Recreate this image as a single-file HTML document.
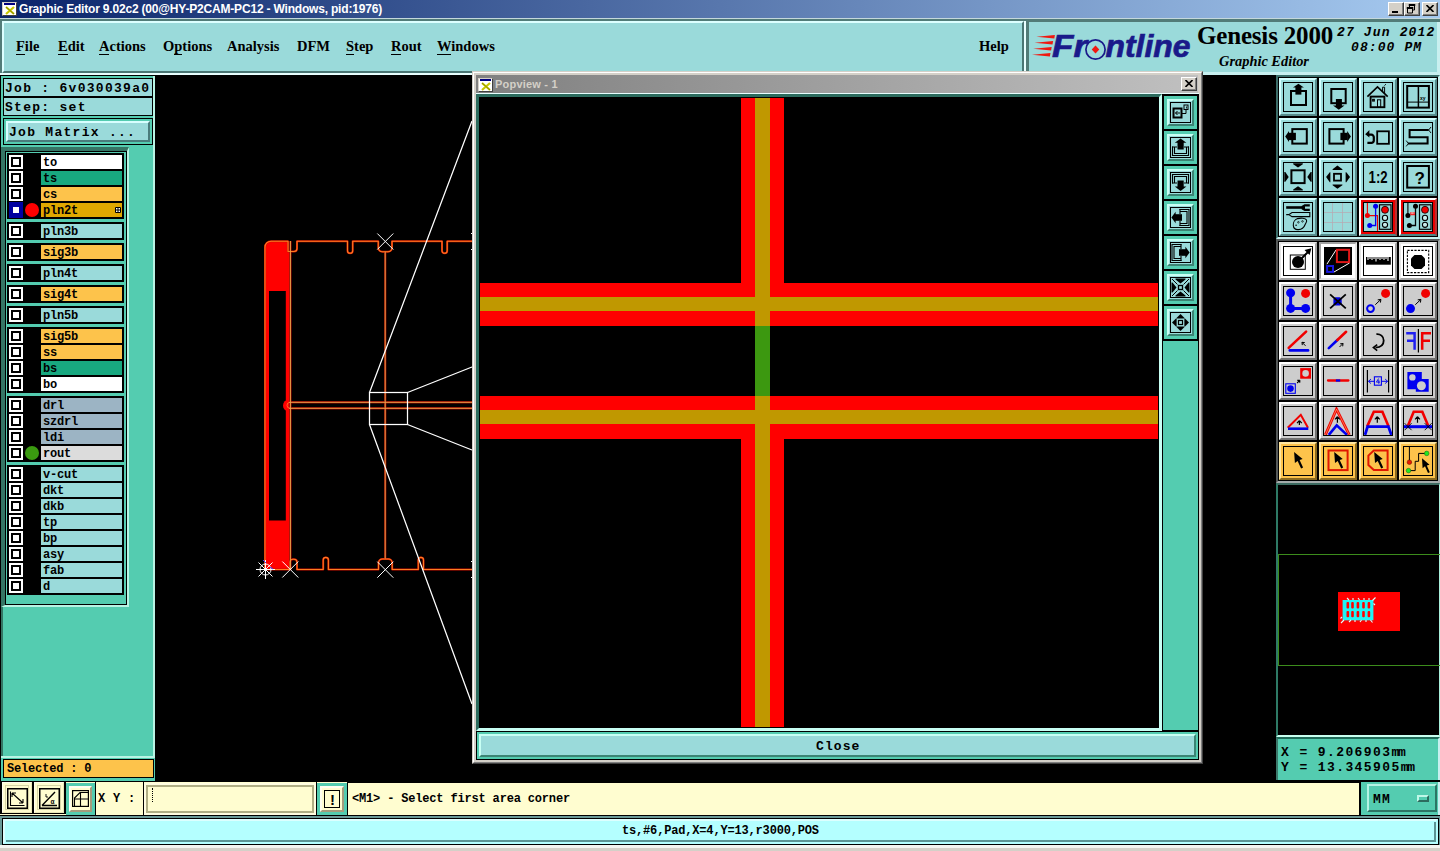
<!DOCTYPE html><html><head><meta charset="utf-8"><title>Graphic Editor</title><style>
*{box-sizing:border-box;margin:0;padding:0}
html,body{width:1440px;height:851px;overflow:hidden;background:#d4d0c8}
body{position:relative;font-family:"Liberation Mono",monospace;font-weight:bold;font-size:13px;color:#000}
.a{position:absolute}
.serif{font-family:"Liberation Serif",serif}
.sans{font-family:"Liberation Sans",sans-serif}
.mono{font-family:"Liberation Mono",monospace}
.t{position:absolute;white-space:nowrap;line-height:1}
.mi{position:absolute;top:38px;font:bold 14.5px "Liberation Serif",serif;white-space:nowrap;line-height:16px}
.mi u{text-decoration:none;border-bottom:1px solid #000;padding-bottom:0}
.btn{position:absolute;width:38px;height:38px;border:2px solid;border-color:#d4ffff #588c8c #588c8c #d4ffff;background:#9adada}
.btn i{position:absolute;left:2px;top:2px;width:30px;height:30px;border:1px solid #000;display:block}
.btn svg{position:absolute;left:3px;top:3px;width:28px;height:28px;overflow:hidden}
.g .btn,.btn.g{background:#cdcdcd;border-color:#ffffff #707070 #707070 #ffffff}
.btn.w{background:#ffffff;border-color:#e6e6e6 #a2a2a2 #a2a2a2 #e6e6e6}
.btn.o{background:#fdc34b;border-color:#ffe6a0 #8a6a20 #8a6a20 #ffe6a0}
.row{position:absolute;left:0;width:116px;height:16px}
.cb{position:absolute;left:2px;top:1px;width:14px;height:14px;background:#fff;border:2px solid #fff;box-shadow:inset 0 0 0 2px #000}
.lb{position:absolute;left:34px;top:1px;width:81px;height:14px;font:bold 12px/16px "Liberation Mono",monospace;letter-spacing:-0.2px;padding-left:2px;white-space:nowrap;overflow:hidden}
.grp{position:absolute;left:7px;width:117px;background:#000}
</style></head><body>
<div class="a" style="left:0;top:0;width:1440px;height:18px;background:linear-gradient(90deg,#0a246a,#a6caf0)"></div>
<div class="a" style="left:2px;top:2px;width:15px;height:14px;background:#fff;border:1px solid #d4d0c8;border-right-color:#404040;border-bottom-color:#404040"><div class="a" style="left:1px;top:0;width:11px;height:2px;background:#000080"></div><svg class="a" style="left:2px;top:3px" width="10" height="9" viewBox="0 0 10 9"><path d="M1 1L9 8M9 1L1 8" stroke="#c8c800" stroke-width="2.2"/><path d="M1 1L9 8" stroke="#606000" stroke-width=".6"/></svg></div>
<div class="t sans" style="left:19px;top:3px;font-size:12px;font-weight:bold;color:#fff;letter-spacing:-0.19px">Graphic Editor 9.02c2 (00@HY-P2CAM-PC12 - Windows, pid:1976)</div>
<div class="a" style="left:1388px;top:2px;width:16px;height:14px;background:#d4d0c8;border:1px solid;border-color:#fff #404040 #404040 #fff;box-shadow:inset -1px -1px 0 #808080"><div class="a" style="left:3px;top:8px;width:6px;height:2px;background:#000"></div></div><div class="a" style="left:1404px;top:2px;width:16px;height:14px;background:#d4d0c8;border:1px solid;border-color:#fff #404040 #404040 #fff;box-shadow:inset -1px -1px 0 #808080"><svg class="a" style="left:1px;top:1px" width="10" height="10" viewBox="0 0 10 10"><path d="M3 0.5h6v1h-6zM3.5 1v2M8.5 1v5H7" stroke="#000" fill="none"/><path d="M1 3.5h6v1H1zM1.5 4v5h5V4" stroke="#000" fill="none"/></svg></div><div class="a" style="left:1422px;top:2px;width:16px;height:14px;background:#d4d0c8;border:1px solid;border-color:#fff #404040 #404040 #fff;box-shadow:inset -1px -1px 0 #808080"><svg class="a" style="left:3px;top:2px" width="8" height="7" viewBox="0 0 8 7"><path d="M0.5 0L7.5 7M7.5 0L0.5 7" stroke="#000" stroke-width="1.6"/></svg></div>
<div class="a" style="left:0;top:18px;width:1440px;height:57px;background:#527c78"></div>
<div class="a" style="left:0;top:18px;width:1440px;height:1px;background:#c4d8dc"></div>
<div class="a" style="left:2px;top:21px;width:1022px;height:52px;background:#9adada;border:2px solid;border-color:#dcffff #4a7674 #4a7674 #dcffff"></div>
<div class="a" style="left:1024px;top:21px;width:2px;height:54px;background:#e8ffff"></div>
<div class="a" style="left:1029px;top:22px;width:411px;height:50px;background:#9adada"></div>
<div class="a" style="left:1026px;top:72px;width:414px;height:3px;background:#c8f0f0"></div>
<div class="a" style="left:1437px;top:22px;width:3px;height:52px;background:#c8f0f0"></div>
<div class="a" style="left:0;top:73px;width:1024px;height:2px;background:#e8ffff"></div>
<div class="mi" style="left:16px"><u>F</u>ile</div>
<div class="mi" style="left:58px"><u>E</u>dit</div>
<div class="mi" style="left:99px"><u>A</u>ctions</div>
<div class="mi" style="left:163px">O<u>p</u>tions</div>
<div class="mi" style="left:227px">Analysis</div>
<div class="mi" style="left:297px">DFM</div>
<div class="mi" style="left:346px"><u>S</u>tep</div>
<div class="mi" style="left:391px"><u>R</u>out</div>
<div class="mi" style="left:437px"><u>W</u>indows</div>
<div class="mi" style="left:979px">Help</div>
<svg class="a" style="left:1028px;top:22px" width="172" height="50" viewBox="1028 22 172 50"><g fill="#f01810"><path d="M1036.400 36.800l18.500-1.800-.6 3.400z"/><path d="M1034.600 42.800l18.500-1.800-.6 3.400z"/><path d="M1033.200 48.800l18.500-1.800-.6 3.400z"/><path d="M1032 54.800l18.500-1.800-.6 3.400z"/></g><g font-family="Liberation Sans,sans-serif" font-weight="bold" font-style="italic" font-size="31" fill="#1a1a8a" stroke="#1a1a8a" stroke-width=".7"><text x="1052" y="56.600" textLength="35" lengthAdjust="spacingAndGlyphs">Fr</text><text x="1105.500" y="56.600" textLength="85" lengthAdjust="spacingAndGlyphs">ntline</text></g><circle cx="1095.500" cy="49.500" r="9.600" fill="none" stroke="#1a1a8a" stroke-width="1.700"/><path d="M1095.500 45.500l3.800 4-3.800 4-3.800-4z" fill="#f01810"/></svg>
<div class="t serif" style="left:1197px;top:23px;font-size:25px;letter-spacing:-0.18px;font-weight:bold">Genesis 2000</div>
<div class="t serif" style="left:1219px;top:54px;font-size:14.4px;font-weight:bold;font-style:italic">Graphic Editor</div>
<div class="t mono" style="left:1337px;top:26px;font-size:13px;font-weight:bold;font-style:italic;letter-spacing:1.15px">27 Jun 2012</div>
<div class="t mono" style="left:1351px;top:41px;font-size:13px;font-weight:bold;font-style:italic;letter-spacing:1.1px">08:00 PM</div>
<div class="a" style="left:0;top:75px;width:1440px;height:707px;background:#000"></div>
<svg class="a" style="left:156px;top:75px" width="1120" height="707" viewBox="156 75 1120 707">
<path d="M265 247a6 6 0 0 1 6-6H288v10.500h2.500V570H265z" fill="#ff0000"/>
<rect x="269" y="291" width="16.800" height="229.500" fill="#000"/>
<g fill="none" stroke-linejoin="round"><path d="M472 241.200H447.200v9.500a2.600 2.600 0 0 1-5.200 0v-9.500H392v6.500a4 4 0 0 1-4 4h-5.700a4 4 0 0 1-4-4v-6.500H352.700v9.500a2.600 2.600 0 0 1-5.200 0v-9.500H297v7.300a3 3 0 0 1-3 3H288v-10.300H271a6 6 0 0 0-6 6V569.500H290v-7.300a3 3 0 0 1 3-3h1a3 3 0 0 1 3 3v7.300h26.200v-9.500a2.600 2.600 0 0 1 5.200 0v9.500H378.500v-6.500a4 4 0 0 1 4-4h5.700a4 4 0 0 1 4 4v6.500H418.300v-9.500a2.600 2.600 0 0 1 5.200 0v9.500H472" stroke="#c81000" stroke-width="2"/><path d="M290.400 241V570M385.200 251.800V558.700M472 402.300H289a3 3 0 0 0 0 6H472" stroke="#900800" stroke-width="2.400"/><path d="M472 241.200H447.200v9.500a2.600 2.600 0 0 1-5.200 0v-9.500H392v6.500a4 4 0 0 1-4 4h-5.700a4 4 0 0 1-4-4v-6.500H352.700v9.500a2.600 2.600 0 0 1-5.200 0v-9.500H297v7.300a3 3 0 0 1-3 3H288v-10.300H271a6 6 0 0 0-6 6V569.500H290v-7.300a3 3 0 0 1 3-3h1a3 3 0 0 1 3 3v7.300h26.200v-9.500a2.600 2.600 0 0 1 5.200 0v9.500H378.500v-6.500a4 4 0 0 1 4-4h5.700a4 4 0 0 1 4 4v6.500H418.300v-9.500a2.600 2.600 0 0 1 5.200 0v9.500H472" stroke="#ff7c20" stroke-width="1.100"/><path d="M290.400 241V570M385.200 251.800V558.700M472 402.300H289a3 3 0 0 0 0 6H472" stroke="#eca048" stroke-width="1"/></g>
<path d="M289 399.500a6 6 0 0 0 0 12z" fill="#ff0000"/><path d="M290 402.300a3 3 0 0 0 0 6" fill="none" stroke="#ff8030" stroke-width=".8"/>
<g fill="none" stroke="#ffffff" stroke-width="1.250"><rect x="369.500" y="392.500" width="38" height="32"/><path d="M369.500 392.500L472 121M369.500 424.500L472 704M407.500 392.500L472 367M407.500 424.500L472 450"/></g>
<path d="M377.3 233.5L393.3 249.5M393.3 233.5L377.3 249.5" stroke="#fff" stroke-width="1" fill="none"/>
<path d="M282.3 561.5L298.3 577.5M298.3 561.5L282.3 577.5" stroke="#fff" stroke-width="1" fill="none"/>
<path d="M377.3 561.7L393.3 577.7M393.3 561.7L377.3 577.7" stroke="#fff" stroke-width="1" fill="none"/>
<g stroke="#fff" stroke-width="1" fill="none"><circle cx="265.500" cy="569.500" r="5.500"/><path d="M256 569.500h19M265.500 560v19M258.500 562.500l14 14M272.500 562.500l-14 14"/></g><path d="M263 560l3 3M270 567l3 2" stroke="#4040ff" stroke-width="1"/>
<path d="M471 233.500h1M471 249.500h1M471 561.500h1M471 577.500h1" stroke="#fff" stroke-width="1"/>
</svg>
<div class="a" style="left:0;top:75px;width:156px;height:707px;background:#000"></div>
<div class="a" style="left:1px;top:76px;width:154px;height:706px;background:#54ccb0"></div>
<div class="a" style="left:1px;top:76px;width:154px;height:682px;border:solid #b8f4e4;border-width:0 2px 2px 0"></div>
<div class="a" style="left:1px;top:147px;width:2px;height:609px;background:#357565"></div>
<div class="a" style="left:3px;top:78px;width:150px;height:19px;background:#9adada;border:1px solid #000"></div>
<div class="a" style="left:3px;top:97px;width:150px;height:19px;background:#9adada;border:1px solid #000"></div>
<div class="t" style="left:5px;top:82px;font-size:13px;letter-spacing:1.28px">Job : 6v030039a0</div>
<div class="t" style="left:5px;top:101px;font-size:13px;letter-spacing:1.28px">Step: set</div>
<div class="a" style="left:3px;top:118px;width:150px;height:27px;border:1px solid #000;background:#54ccb0"></div>
<div class="a" style="left:6px;top:121px;width:144px;height:21px;background:#9adada;border:2px solid;border-color:#d8ffff #4a7c7c #4a7c7c #d8ffff"></div>
<div class="t" style="left:9px;top:126px;font-size:13px;letter-spacing:1.28px">Job Matrix ...</div>
<div class="a" style="left:1px;top:147px;width:128px;height:460px;background:#000;border:solid;border-width:4px 2px 2px 4px;border-color:#357565 #b8f4e4 #b8f4e4 #357565"></div>
<div class="a" style="left:6px;top:152px;width:120px;height:452px;background:#54ccb0"></div>
<div class="grp" style="top:153px;height:66px">
<div class="row" style="top:1px">
<div class="cb"></div>
<div class="lb" style="background:#fff">to</div>
</div>
<div class="row" style="top:17px">
<div class="cb"></div>
<div class="lb" style="background:#18a880">ts</div>
</div>
<div class="row" style="top:33px">
<div class="cb"></div>
<div class="lb" style="background:#fdc34b">cs</div>
</div>
<div class="row" style="top:49px">
<div class="cb" style="border-color:#0000a0;box-shadow:inset 0 0 0 2px #0000a0;top:0;height:16px;border-width:3px 2px"></div>
<div class="a" style="left:18px;top:1px;width:14px;height:14px;border-radius:7px;background:#f00"></div>
<div class="lb" style="background:#e0a800">pln2t<svg class="a" style="left:74px;top:4px" width="6" height="6" viewBox="0 0 6 6"><path d="M.5.5h5v5h-5zM3 0v6M0 3h6" stroke="#000" fill="#fff" stroke-width="1"/></svg></div>
</div>
</div>
<div class="grp" style="top:222px;height:18px">
<div class="row" style="top:1px">
<div class="cb"></div>
<div class="lb" style="background:#9adada">pln3b</div>
</div>
</div>
<div class="grp" style="top:243px;height:18px">
<div class="row" style="top:1px">
<div class="cb"></div>
<div class="lb" style="background:#fdc34b">sig3b</div>
</div>
</div>
<div class="grp" style="top:264px;height:18px">
<div class="row" style="top:1px">
<div class="cb"></div>
<div class="lb" style="background:#9adada">pln4t</div>
</div>
</div>
<div class="grp" style="top:285px;height:18px">
<div class="row" style="top:1px">
<div class="cb"></div>
<div class="lb" style="background:#fdc34b">sig4t</div>
</div>
</div>
<div class="grp" style="top:306px;height:18px">
<div class="row" style="top:1px">
<div class="cb"></div>
<div class="lb" style="background:#9adada">pln5b</div>
</div>
</div>
<div class="grp" style="top:327px;height:66px">
<div class="row" style="top:1px">
<div class="cb"></div>
<div class="lb" style="background:#fdc34b">sig5b</div>
</div>
<div class="row" style="top:17px">
<div class="cb"></div>
<div class="lb" style="background:#fdc34b">ss</div>
</div>
<div class="row" style="top:33px">
<div class="cb"></div>
<div class="lb" style="background:#18a880">bs</div>
</div>
<div class="row" style="top:49px">
<div class="cb"></div>
<div class="lb" style="background:#fff">bo</div>
</div>
</div>
<div class="grp" style="top:396px;height:66px">
<div class="row" style="top:1px">
<div class="cb"></div>
<div class="lb" style="background:#9cb4c4">drl</div>
</div>
<div class="row" style="top:17px">
<div class="cb"></div>
<div class="lb" style="background:#9cb4c4">szdrl</div>
</div>
<div class="row" style="top:33px">
<div class="cb"></div>
<div class="lb" style="background:#9cb4c4">ldi</div>
</div>
<div class="row" style="top:49px">
<div class="cb"></div>
<div class="a" style="left:18px;top:1px;width:14px;height:14px;border-radius:7px;background:#3a9a10"></div>
<div class="lb" style="background:#dcdcdc">rout</div>
</div>
</div>
<div class="grp" style="top:465px;height:130px">
<div class="row" style="top:1px">
<div class="cb"></div>
<div class="lb" style="background:#9adada">v-cut</div>
</div>
<div class="row" style="top:17px">
<div class="cb"></div>
<div class="lb" style="background:#9adada">dkt</div>
</div>
<div class="row" style="top:33px">
<div class="cb"></div>
<div class="lb" style="background:#9adada">dkb</div>
</div>
<div class="row" style="top:49px">
<div class="cb"></div>
<div class="lb" style="background:#9adada">tp</div>
</div>
<div class="row" style="top:65px">
<div class="cb"></div>
<div class="lb" style="background:#9adada">bp</div>
</div>
<div class="row" style="top:81px">
<div class="cb"></div>
<div class="lb" style="background:#9adada">asy</div>
</div>
<div class="row" style="top:97px">
<div class="cb"></div>
<div class="lb" style="background:#9adada">fab</div>
</div>
<div class="row" style="top:113px">
<div class="cb"></div>
<div class="lb" style="background:#9adada">d</div>
</div>
</div>
<div class="a" style="left:3px;top:759px;width:151px;height:19px;background:#fdc34b;border:1px solid #000"></div>
<div class="t" style="left:7px;top:763px;font-size:12px;letter-spacing:-0.17px">Selected : 0</div>
<div class="a" style="left:472px;top:71px;width:731px;height:693px;background:#d4d0c8;border:1px solid;border-color:#d4d0c8 #404040 #404040 #d4d0c8"><div class="a" style="left:0;top:0;right:0;bottom:0;border:1px solid;border-color:#fff #808080 #808080 #fff"></div></div>
<div class="a" style="left:476px;top:75px;width:722px;height:18px;background:linear-gradient(90deg,#808080,#c0c0c0)"></div>
<div class="a" style="left:478px;top:78px;width:15px;height:14px;background:#fff;border:1px solid #d4d0c8;border-right-color:#404040;border-bottom-color:#404040"><div class="a" style="left:1px;top:0;width:11px;height:2px;background:#000080"></div><svg class="a" style="left:2px;top:3px" width="10" height="9" viewBox="0 0 10 9"><path d="M1 1L9 8M9 1L1 8" stroke="#c8c800" stroke-width="2.200"/><path d="M1 1L9 8" stroke="#606000" stroke-width=".6"/></svg></div>
<div class="t sans" style="left:495px;top:79px;font-size:11px;font-weight:bold;color:#d4d0c8;letter-spacing:0.2px">Popview - 1</div>
<div class="a" style="left:1181px;top:77px;width:16px;height:14px;background:#d4d0c8;border:1px solid;border-color:#fff #404040 #404040 #fff;box-shadow:inset -1px -1px 0 #808080"><svg class="a" style="left:3px;top:2px" width="8" height="7" viewBox="0 0 8 7"><path d="M0.500 0L7.500 7M7.500 0L0.500 7" stroke="#000" stroke-width="1.600"/></svg></div>
<div class="a" style="left:476px;top:93px;width:723px;height:667px;background:#000"></div>
<div class="a" style="left:476px;top:93px;width:723px;height:1px;background:#e8ffff"></div>
<div class="a" style="left:476px;top:94px;width:686px;height:637px;background:#000;border:3px solid;border-color:#2c6c5e #c8fff4 #c8fff4 #2c6c5e"></div>
<svg class="a" style="left:479px;top:97px" width="680" height="631" viewBox="479 97 680 631"><rect x="741" y="98" width="43" height="228" fill="#ff0000"/><rect x="741" y="396" width="43" height="331" fill="#ff0000"/><rect x="480" y="283" width="678" height="43" fill="#ff0000"/><rect x="480" y="396" width="678" height="43" fill="#ff0000"/><rect x="755" y="98" width="15" height="629" fill="#c09800"/><rect x="480" y="297" width="678" height="14" fill="#c09800"/><rect x="480" y="410" width="678" height="14" fill="#c09800"/><rect x="755" y="326" width="15" height="70" fill="#3c9810"/></svg>
<div class="a" style="left:1162px;top:94px;width:36px;height:636px;background:#54ccb0;border-left:1px solid #000"></div>
<div class="a" style="left:1162px;top:94px;width:37px;height:247px;background:#000"></div>
<div class="a" style="left:1164px;top:96px;width:33px;height:33px;background:#9adada;border:3px solid #54ccb0"><div class="a" style="left:0;top:0;width:27px;height:27px;border:2px solid;border-color:#c8fff4 #3c8474 #3c8474 #c8fff4"><div class="a" style="left:1px;top:1px;width:21px;height:21px;border:1px solid #000"></div><svg class="a" style="left:2px;top:2px;overflow:hidden" width="19" height="19" viewBox="0 0 19 19"><rect x="2.500" y="5.500" width="8" height="9" fill="none" stroke="#000" stroke-width="2"/><path d="M4.500 10h4.500M4.500 10l2-2M4.500 10l2 2" stroke="#000" stroke-width="1" fill="none"/><path d="M11 10.500h4V7" stroke="#000" stroke-width="1" fill="none"/><rect x="13" y="2" width="4" height="4.500" fill="none" stroke="#000" stroke-width="1"/><path d="M15.500 3.500v2" stroke="#000" stroke-width=".8"/></svg></div></div>
<div class="a" style="left:1164px;top:131px;width:33px;height:33px;background:#9adada;border:3px solid #54ccb0"><div class="a" style="left:0;top:0;width:27px;height:27px;border:2px solid;border-color:#c8fff4 #3c8474 #3c8474 #c8fff4"><div class="a" style="left:1px;top:1px;width:21px;height:21px;border:1px solid #000"></div><svg class="a" style="left:2px;top:2px;overflow:hidden" width="19" height="19" viewBox="0 0 19 19"><path d="M1.500 8.500v9h16v-9M3.500 9v6.500h12V9" fill="none" stroke="#000" stroke-width="1.100"/><path d="M1 9h5M13 9h5" stroke="#000" stroke-width="1.100"/><rect x="6.500" y="4" width="6.200" height="7.500" fill="#000"/><polygon points="9.600,0.600 3.800,4.800 15.400,4.800" fill="#000"/></svg></div></div>
<div class="a" style="left:1164px;top:166px;width:33px;height:33px;background:#9adada;border:3px solid #54ccb0"><div class="a" style="left:0;top:0;width:27px;height:27px;border:2px solid;border-color:#c8fff4 #3c8474 #3c8474 #c8fff4"><div class="a" style="left:1px;top:1px;width:21px;height:21px;border:1px solid #000"></div><svg class="a" style="left:2px;top:2px;overflow:hidden" width="19" height="19" viewBox="0 0 19 19"><path d="M1.500 10.500v-9h16v9M3.500 10v-6.500h12V10" fill="none" stroke="#000" stroke-width="1.100"/><path d="M1 10h5M13 10h5" stroke="#000" stroke-width="1.100"/><rect x="6.500" y="7.500" width="6.200" height="6.500" fill="#000"/><polygon points="9.600,18 3.800,13.600 15.400,13.600" fill="#000"/></svg></div></div>
<div class="a" style="left:1164px;top:201px;width:33px;height:33px;background:#9adada;border:3px solid #54ccb0"><div class="a" style="left:0;top:0;width:27px;height:27px;border:2px solid;border-color:#c8fff4 #3c8474 #3c8474 #c8fff4"><div class="a" style="left:1px;top:1px;width:21px;height:21px;border:1px solid #000"></div><svg class="a" style="left:2px;top:2px;overflow:hidden" width="19" height="19" viewBox="0 0 19 19"><path d="M8.500 1.500h9.500v16H8.500M9 3.500h7v12H9" fill="none" stroke="#000" stroke-width="1.100"/><path d="M9 1v5M9 13v5" stroke="#000" stroke-width="1.100"/><rect x="4" y="6.200" width="7" height="6.600" fill="#000"/><polygon points="0.400,9.500 4.600,3.800 4.600,15.200" fill="#000"/></svg></div></div>
<div class="a" style="left:1164px;top:236px;width:33px;height:33px;background:#9adada;border:3px solid #54ccb0"><div class="a" style="left:0;top:0;width:27px;height:27px;border:2px solid;border-color:#c8fff4 #3c8474 #3c8474 #c8fff4"><div class="a" style="left:1px;top:1px;width:21px;height:21px;border:1px solid #000"></div><svg class="a" style="left:2px;top:2px;overflow:hidden" width="19" height="19" viewBox="0 0 19 19"><path d="M10.500 1.500H1v16h9.500M10 3.500H3v12h7" fill="none" stroke="#000" stroke-width="1.100"/><path d="M10 1v5M10 13v5" stroke="#000" stroke-width="1.100"/><rect x="8" y="6.200" width="7" height="6.600" fill="#000"/><polygon points="18.600,9.500 14.400,3.800 14.400,15.200" fill="#000"/></svg></div></div>
<div class="a" style="left:1164px;top:271px;width:33px;height:33px;background:#9adada;border:3px solid #54ccb0"><div class="a" style="left:0;top:0;width:27px;height:27px;border:2px solid;border-color:#c8fff4 #3c8474 #3c8474 #c8fff4"><div class="a" style="left:1px;top:1px;width:21px;height:21px;border:1px solid #000"></div><svg class="a" style="left:2px;top:2px;overflow:hidden" width="19" height="19" viewBox="0 0 19 19"><rect x="7.500" y="7.500" width="4" height="4" fill="none" stroke="#000" stroke-width="1.300"/><polygon points="4.500,0.500 14.500,0.500 14.500,1.500 9.500,5.500 4.500,1.500" fill="#000"/><polygon points="4.500,18.500 14.500,18.500 14.500,17.500 9.500,13.500 4.500,17.500" fill="#000"/><polygon points="0.500,4.500 0.500,14.500 1.500,14.500 5.500,9.500 1.500,4.500" fill="#000"/><polygon points="18.500,4.500 18.500,14.500 17.500,14.500 13.500,9.500 17.500,4.500" fill="#000"/><path d="M1 1l5.500 5.500M18 1l-5.500 5.500M1 18l5.500-5.500M18 18l-5.500-5.500" stroke="#000" stroke-width="1"/></svg></div></div>
<div class="a" style="left:1164px;top:306px;width:33px;height:33px;background:#9adada;border:3px solid #54ccb0"><div class="a" style="left:0;top:0;width:27px;height:27px;border:2px solid;border-color:#c8fff4 #3c8474 #3c8474 #c8fff4"><div class="a" style="left:1px;top:1px;width:21px;height:21px;border:1px solid #000"></div><svg class="a" style="left:2px;top:2px;overflow:hidden" width="19" height="19" viewBox="0 0 19 19"><rect x="7.500" y="7.500" width="4" height="4" fill="none" stroke="#000" stroke-width="1.200"/><polygon points="9.500,1 5.500,5 5.500,5.600 13.500,5.600 13.500,5" fill="#000"/><polygon points="9.500,18 5.500,14 5.500,13.400 13.500,13.400 13.500,14" fill="#000"/><polygon points="1,9.500 5,5.500 5.600,5.500 5.600,13.500 5,13.500" fill="#000"/><polygon points="18,9.500 14,5.500 13.400,5.500 13.400,13.500 14,13.500" fill="#000"/></svg></div></div>
<div class="a" style="left:476px;top:731px;width:723px;height:29px;background:#000"></div>
<div class="a" style="left:477px;top:732px;width:721px;height:27px;background:#9adada;border:2px solid #54ccb0"><div class="a" style="left:0;top:0;right:0;bottom:0;border:2px solid;border-color:#c8fff4 #3c8474 #3c8474 #c8fff4"></div></div>
<div class="t" style="left:816px;top:740px;font-size:13px;letter-spacing:1.1px">Close</div>
<div class="a" style="left:1276px;top:75px;width:164px;height:707px;background:#000"></div>
<div class="a" style="left:1276px;top:75px;width:164px;height:164px;background:#000;border:2px solid;border-color:#3c6e6a #c8f0f0 #c8f0f0 #3c6e6a"></div>
<div class="a" style="left:1276px;top:239px;width:164px;height:244px;background:#000;border:2px solid;border-color:#565a5a #a4acac #a4acac #565a5a"></div>
<div class="btn" style="left:1279px;top:78px"><i></i><svg viewBox="0 0 28 28"><rect x="7" y="8" width="15" height="14" fill="none" stroke="#000" stroke-width="2"/><rect x="11.4" y="4" width="6" height="7.6" fill="#000"/><polygon points="14.4,0.8 9,4.6 19.9,4.6" fill="#000"/></svg></div>
<div class="btn" style="left:1319px;top:78px"><i></i><svg viewBox="0 0 28 28"><rect x="7.3" y="6" width="14.4" height="14.2" fill="none" stroke="#000" stroke-width="2"/><rect x="11.9" y="16" width="6" height="7" fill="#000"/><polygon points="14.8,26.8 9,22.6 20.5,22.6" fill="#000"/></svg></div>
<div class="btn" style="left:1359px;top:78px"><i></i><svg viewBox="0 0 28 28"><path d="M3.4 13.6L13.5 3.9L23.7 13.6" fill="none" stroke="#000" stroke-width="1.6"/><rect x="6.6" y="13.6" width="13.8" height="10.6" fill="none" stroke="#000" stroke-width="1.9"/><path d="M18.6 8.5V4.2h2v6.5M20.5 2.6l1.3-1.4" fill="none" stroke="#000" stroke-width="1"/><rect x="13.5" y="16.8" width="3.2" height="7.4" fill="none" stroke="#000" stroke-width="1"/><rect x="8.6" y="16.3" width="1.8" height="1.8" fill="none" stroke="#000" stroke-width="1"/></svg></div>
<div class="btn" style="left:1399px;top:78px"><i></i><svg viewBox="0 0 28 28"><rect x="3.2" y="3" width="21.7" height="21.6" fill="none" stroke="#000" stroke-width="2"/><path d="M14.4 3v22" stroke="#000" stroke-width="1.5"/><path d="M3 19.1h22" stroke="#000" stroke-width="1"/><text x="16" y="17" font-size="5" font-family="Liberation Sans,sans-serif" font-weight="bold">xy</text></svg></div>
<div class="btn" style="left:1279px;top:118px"><i></i><svg viewBox="0 0 28 28"><rect x="8.3" y="6.1" width="14.5" height="14.5" fill="none" stroke="#000" stroke-width="2"/><rect x="4.7" y="9.8" width="7.2" height="7.3" fill="#000"/><polygon points="1.2,13.5 5,8.1 5,18.9" fill="#000"/></svg></div>
<div class="btn" style="left:1319px;top:118px"><i></i><svg viewBox="0 0 28 28"><rect x="5.4" y="6.1" width="14.2" height="14.5" fill="none" stroke="#000" stroke-width="2"/><rect x="16.4" y="9.8" width="7.2" height="7.3" fill="#000"/><polygon points="26.9,13.5 23.2,8.1 23.2,18.9" fill="#000"/></svg></div>
<div class="btn" style="left:1359px;top:118px"><i></i><svg viewBox="0 0 28 28"><rect x="13.2" y="8.3" width="11.7" height="12.5" fill="none" stroke="#000" stroke-width="1.8"/><path d="M3.4 19.8h4.4a2.2 2.2 0 0 0 2-2.2v-3.5a2.4 2.4 0 0 0-2.4-2.4H5" fill="none" stroke="#000" stroke-width="2.2"/><polygon points="1.2,11.3 5.4,7 5.4,14.6" fill="#000"/></svg></div>
<div class="btn" style="left:1399px;top:118px"><i></i><svg viewBox="0 0 28 28"><path d="M24.7 7H5.6v7.3h18v6.2H3.9" fill="none" stroke="#000" stroke-width="2"/><path d="M27 4l-2.4 3 2.4 3M2.2 17.6l2.2 2.9-2.2 2.9" fill="none" stroke="#000" stroke-width=".9"/></svg></div>
<div class="btn" style="left:1279px;top:158px"><i></i><svg viewBox="0 0 28 28"><rect x="7.4" y="7.3" width="13.2" height="12.8" fill="none" stroke="#000" stroke-width="2"/><polygon points="9.2,0.3 18.8,0.3 18.8,1.3 14,4.4 9.2,1.3" fill="#000"/><polygon points="9.2,27.4 18.8,27.4 18.8,26.4 14,23.2 9.2,26.4" fill="#000"/><polygon points="0.3,9 0.3,18.8 1.3,18.8 4.7,13.9 1.3,9" fill="#000"/><polygon points="27.7,9 27.7,18.8 26.7,18.8 23.3,13.9 26.7,9" fill="#000"/></svg></div>
<div class="btn" style="left:1319px;top:158px"><i></i><svg viewBox="0 0 28 28"><rect x="10" y="10.8" width="7" height="6.8" fill="none" stroke="#000" stroke-width="1.8"/><polygon points="13.4,2.6 8.6,6.3 8.6,7 18.4,7 18.4,6.3" fill="#000"/><polygon points="13.4,25.8 8.6,22.2 8.6,21.5 18.4,21.5 18.4,22.2" fill="#000"/><polygon points="2.1,14.1 5.8,9.3 6.4,9.3 6.4,19.3 5.8,19.3" fill="#000"/><polygon points="26,14.1 22.3,9.3 21.6,9.3 21.6,19.3 22.3,19.3" fill="#000"/></svg></div>
<div class="btn" style="left:1359px;top:158px"><i></i><svg viewBox="0 0 28 28"><text x="4.6" y="20" font-size="17" font-family="Liberation Sans,sans-serif" font-weight="bold" textLength="19" lengthAdjust="spacingAndGlyphs">1:2</text></svg></div>
<div class="btn" style="left:1399px;top:158px"><i></i><svg viewBox="0 0 28 28"><rect x="3.2" y="3" width="21.7" height="21.6" fill="none" stroke="#000" stroke-width="2"/><text x="10.6" y="21" font-size="17" font-family="Liberation Sans,sans-serif" font-weight="bold">?</text></svg></div>
<div class="btn" style="left:1279px;top:198px"><i></i><svg viewBox="0 0 28 28"><path d="M2.200 4.500h16.500" stroke="#000" stroke-width="2.600"/><polygon points="25.800,1.200 20.500,1.200 17.600,3 17.600,6.200 20.500,7.900 25.800,7.900 25.800,5.700 21,5.700 21,3.400 25.800,3.400" fill="#000"/><path d="M2.200 11.600h2.600l3.200-2.100h17.800v4.100H8l-3.200-2" fill="none" stroke="#000" stroke-width="1.100"/><path d="M13.500 15.600c3.500-1 8-.500 9 1.400c.8 1.800-.8 3-1.600 5c-.8 2.200-3 4.400-6.400 4.600c-3 .2-5-1.600-5.200-4.200c-.2-2.600 1.400-5.800 4.200-6.800z" fill="none" stroke="#000" stroke-width="1.100"/><circle cx="14.400" cy="19.300" r=".8" fill="none" stroke="#000" stroke-width=".7"/><circle cx="18.500" cy="18.400" r=".8" fill="none" stroke="#000" stroke-width=".7"/><circle cx="12.100" cy="22.300" r=".8" fill="#000"/></svg></div>
<div class="btn" style="left:1319px;top:198px"><i></i><svg viewBox="0 0 28 28"><path d="M8.500 0v28M18.500 0v28M0 9.500h28M0 19.500h28" stroke="#b8a8b0" stroke-width=".7" fill="none"/></svg></div>
<div class="btn" style="left:1359px;top:198px;border-color:#ffffff #b03434 #4c8484 #ffffff;box-shadow:inset 0 0 0 2px #e80000"><i></i><svg viewBox="0 0 28 28"><path d="M3.400 0v12.600h10.100V28" fill="none" stroke="#f00000" stroke-width="1.100"/><circle cx="3.400" cy="12.600" r="2.500" fill="#f00000"/><path d="M11.600 3.300v19.200H5.700" fill="none" stroke="#0000f0" stroke-width="1.300"/><circle cx="11.600" cy="3.300" r="2.500" fill="#0000f0"/><circle cx="5.700" cy="22.500" r="2.500" fill="#0000f0"/><rect x="15.500" y="1.800" width="11.500" height="24.500" fill="none" stroke="#000" stroke-width="1.200"/><circle cx="21" cy="6.8" r="3.500" fill="#f00000" stroke="#000" stroke-width=".8"/><circle cx="21" cy="14.900" r="2.600" fill="#c8ecec" stroke="#000" stroke-width="1.100"/><circle cx="21" cy="21.800" r="2.600" fill="#c8ecec" stroke="#000" stroke-width="1.100"/></svg></div>
<div class="btn" style="left:1399px;top:198px;border-color:#ffffff #b03434 #4c8484 #ffffff;box-shadow:inset 0 0 0 2px #e80000"><i></i><svg viewBox="0 0 28 28"><path d="M3.900 0v12.400" fill="none" stroke="#000" stroke-width="1.100"/><circle cx="3.900" cy="12.400" r="2.500" fill="#000"/><path d="M11.500 3.300v19.200H5.400" fill="none" stroke="#000" stroke-width="1.300"/><circle cx="11.500" cy="3.300" r="2.500" fill="#000"/><circle cx="5.400" cy="22.500" r="2.500" fill="#000"/><rect x="6.200" y="9.200" width="4.800" height="3" fill="#f01010"/><path d="M7.300 9.200v2M8.600 9.200v2M9.900 9.200v2" stroke="#fff" stroke-width=".6" fill="none"/><rect x="15.500" y="1.800" width="11.500" height="24.500" fill="none" stroke="#000" stroke-width="1.200"/><circle cx="21" cy="6.8" r="3.500" fill="#f00000" stroke="#000" stroke-width=".8"/><circle cx="21" cy="14.900" r="2.600" fill="#c8ecec" stroke="#000" stroke-width="1.100"/><circle cx="21" cy="21.800" r="2.600" fill="#c8ecec" stroke="#000" stroke-width="1.100"/></svg></div>
<div class="btn w" style="left:1279px;top:242px"><i></i><svg viewBox="0 0 28 28"><rect x="6.300" y="8" width="15" height="14.300" fill="none" stroke="#000" stroke-width="1"/><circle cx="14" cy="15" r="6" fill="#000"/><path d="M17.500 11.500L25 4" stroke="#000" stroke-width="2"/><polygon points="27.400,1.200 20.500,3 25.600,8" fill="#000"/></svg></div>
<div class="btn w" style="left:1319px;top:242px;border-color:#a2a2a2 #e6e6e6 #e6e6e6 #a2a2a2"><i style="border-color:#fff"></i><svg viewBox="0 0 28 28"><rect x="0" y="0" width="28" height="28" fill="#000"/><path d="M12 3L2.900 17.200M25.500 16L10 25" stroke="#fff" stroke-width="1"/><rect x="12.900" y="2.800" width="12.200" height="12.300" fill="none" stroke="#e01818" stroke-width="2"/><rect x="3.100" y="19" width="5.900" height="5.900" fill="none" stroke="#1818e0" stroke-width="2"/></svg></div>
<div class="btn w" style="left:1359px;top:242px"><i></i><svg viewBox="0 0 28 28"><rect x="2" y="10" width="24.800" height="7.700" fill="#000"/><path d="M4 9.500v3.500M6 9.500v2.500M8 9.500v3.500M10 9.500v2.500M12 9.500v5M14 9.500v2.500M16 9.500v3.500M18 9.500v2.500M20 9.500v3.500M22 9.500v2.500M24 9.500v4.500" stroke="#fff" stroke-width="1.100"/></svg></div>
<div class="btn w" style="left:1399px;top:242px"><i></i><svg viewBox="0 0 28 28"><rect x="3.400" y="3.400" width="21.300" height="22.200" fill="none" stroke="#000" stroke-width="1.100" stroke-dasharray="2.200 1.300"/><polygon points="10.500,8 17.500,8 21,11.500 21,18.500 17.500,22 10.500,22 7,18.500 7,11.500" fill="#000"/></svg></div>
<div class="btn g" style="left:1279px;top:282px"><i></i><svg viewBox="0 0 28 28"><path d="M6.600 5.900v15.500h15" stroke="#0000f0" stroke-width="3" fill="none"/><circle cx="6.600" cy="5.900" r="4.500" fill="#0000f0"/><circle cx="6.600" cy="21.400" r="4.500" fill="#0000f0"/><circle cx="21.600" cy="21.400" r="4.500" fill="#0000f0"/><circle cx="21.600" cy="6.400" r="4.500" fill="#f00000"/></svg></div>
<div class="btn g" style="left:1319px;top:282px"><i></i><svg viewBox="0 0 28 28"><polygon points="11,10.300 16,10.300 17.700,12 17.700,17 16,18.600 11,18.600 9.400,17 9.400,12" fill="#0000e0"/><path d="M6.100 7.300L21.800 21.400M21.800 7.300L6.100 21.400" stroke="#000" stroke-width="1.800"/></svg></div>
<div class="btn g" style="left:1359px;top:282px"><i></i><svg viewBox="0 0 28 28"><circle cx="21.600" cy="6.400" r="4.500" fill="#f00000"/><circle cx="6.500" cy="21.600" r="3.400" fill="none" stroke="#0000f0" stroke-width="2"/><path d="M11.300 17.700L16.900 12.400M16.900 12.400l-3.200.5M16.900 12.400l-.5 3.200" stroke="#000" stroke-width="1" fill="none"/></svg></div>
<div class="btn g" style="left:1399px;top:282px"><i></i><svg viewBox="0 0 28 28"><circle cx="21.600" cy="6.400" r="4.500" fill="#f00000"/><circle cx="6.500" cy="21.600" r="4.500" fill="#0000f0"/><path d="M11.300 17.700L16.900 12.400M16.900 12.400l-3.200.5M16.900 12.400l-.5 3.200" stroke="#000" stroke-width="1" fill="none"/></svg></div>
<div class="btn g" style="left:1279px;top:322px"><i></i><svg viewBox="0 0 28 28"><path d="M4.700 20.900L22.100 4.600" stroke="#f00000" stroke-width="2.600" stroke-linecap="round"/><path d="M5.800 23.400H24.100" stroke="#0000f0" stroke-width="2.600" stroke-linecap="round"/><path d="M21.500 18.800l-3.500-3.500M18 15.300l2.800.3M18 15.300l.3 2.800" stroke="#000" stroke-width="1" fill="none"/></svg></div>
<div class="btn g" style="left:1319px;top:322px"><i></i><svg viewBox="0 0 28 28"><path d="M4.800 21.100L13.400 13" stroke="#0000f0" stroke-width="2.600" stroke-linecap="round"/><path d="M13.400 13L22.100 4.800" stroke="#f00000" stroke-width="2.600" stroke-linecap="round"/><path d="M15.500 20l3.500-3.500M19 16.500l-2.800.3M19 16.500l-.3 2.800" stroke="#000" stroke-width="1" fill="none"/></svg></div>
<div class="btn g" style="left:1359px;top:322px"><i></i><svg viewBox="0 0 28 28"><path d="M12.400 7.100c4-.4 7.300 2.400 7.300 6.400c0 4-3 6.800-8.200 7.100" stroke="#000" stroke-width="1.800" fill="none"/><path d="M13.200 17.600l-3.800 3 3.800 3" stroke="#000" stroke-width="1.600" fill="none"/></svg></div>
<div class="btn g" style="left:1399px;top:322px"><i></i><svg viewBox="0 0 28 28"><path d="M14.400 2v23.600" stroke="#000" stroke-width="1.200"/><path d="M18.200 22.800V6.300h8.800M18.200 13.700h7.800" stroke="#f00000" stroke-width="2.500" fill="none"/><path d="M10.600 22.800V6.300H2.200M10.600 13.700H3" stroke="#2020f0" stroke-width="2.500" fill="none"/></svg></div>
<div class="btn g" style="left:1279px;top:362px"><i></i><svg viewBox="0 0 28 28"><rect x="1.800" y="16.800" width="9.500" height="9.500" fill="none" stroke="#0000f0" stroke-width="1.100"/><circle cx="6.500" cy="21.600" r="3.300" fill="#0000f0"/><rect x="16.200" y="1.100" width="10.800" height="10.600" fill="#f00000"/><circle cx="21.600" cy="6.400" r="3.300" fill="#cdcdcd"/><path d="M13.100 16l2.800-2.800M15.900 13.200l-2.600.2M15.900 13.200l-.2 2.600" stroke="#000" stroke-width="1.100" fill="none"/></svg></div>
<div class="btn g" style="left:1319px;top:362px"><i></i><svg viewBox="0 0 28 28"><path d="M4 13.500H24.400" stroke="#f00000" stroke-width="2.300" stroke-linecap="round"/><path d="M11.900 13.500h4.300" stroke="#0000f0" stroke-width="2.300"/></svg></div>
<div class="btn g" style="left:1359px;top:362px"><i></i><svg viewBox="0 0 28 28"><path d="M3.400 3v22.600M24.600 3v22.600" stroke="#000" stroke-width="1.200"/><rect x="10.400" y="9.800" width="7" height="8.400" fill="none" stroke="#0000f0" stroke-width="1.100"/><path d="M4.500 14.300h6M17.400 14.300h6.200M4.500 14.300l2.400-2.200M4.500 14.300l2.400 2.200M23.600 14.300l-2.400-2.200M23.600 14.300l-2.400 2.200" stroke="#0000f0" stroke-width="1" fill="none"/><path d="M14.600 11.500l-2.200 3.600h3.600M14.800 12.800v4" stroke="#0000f0" stroke-width=".9" fill="none"/></svg></div>
<div class="btn g" style="left:1399px;top:362px"><i></i><svg viewBox="0 0 28 28"><path d="M3.400 5.100h14.400v7h6.900v12.700H11.800v-2.600H3.400z" fill="#0000f0"/><circle cx="8.400" cy="10.400" r="3.200" fill="#cdcdcd"/><circle cx="17.400" cy="18.800" r="4.500" fill="#cdcdcd"/></svg></div>
<div class="btn g" style="left:1279px;top:402px"><i></i><svg viewBox="0 0 28 28"><path d="M3.700 20.800L16.800 7.800L24 20.800" fill="none" stroke="#f00000" stroke-width="2"/><path d="M4 21.700H24.300" stroke="#0000f0" stroke-width="2.600"/><path d="M15.4 13.6v4.500M15.4 13.6l-2.4 2.6M15.4 13.6l2.4 2.6" stroke="#000" stroke-width="1.2" fill="none"/></svg></div>
<div class="btn g" style="left:1319px;top:402px"><i></i><svg viewBox="0 0 28 28"><path d="M1.400 27.900L12.500 2.200L25.300 27.900" fill="none" stroke="#f00000" stroke-width="2.800"/><path d="M1.400 27.900L12.500 2.200L25.300 27.900" fill="none" stroke="#ffc080" stroke-width=".6"/><path d="M4.800 27.900L12.700 18.300L23 27.900" fill="none" stroke="#0000f0" stroke-width="2.600"/><path d="M13.4 9.7v6M13.4 9.7l-2.4 2.6M13.4 9.7l2.4 2.6" stroke="#000" stroke-width="1.2" fill="none"/></svg></div>
<div class="btn g" style="left:1359px;top:402px"><i></i><svg viewBox="0 0 28 28"><path d="M3.200 19.400L9.800 4.800h8.600l6.200 14.600" fill="none" stroke="#f00000" stroke-width="2.600"/><path d="M1 27.900l2.600-8.300h20.800l3 8.300" fill="none" stroke="#0000f0" stroke-width="2.800"/><path d="M13.3 9.7v6M13.3 9.7l-2.4 2.6M13.3 9.7l2.4 2.6" stroke="#000" stroke-width="1.2" fill="none"/></svg></div>
<div class="btn g" style="left:1399px;top:402px"><i></i><svg viewBox="0 0 28 28"><path d="M3.600 19.400L9.700 4.800h8.600l6.200 14.600" fill="none" stroke="#f00000" stroke-width="2.600"/><path d="M0 19.700H28" stroke="#0000f0" stroke-width="3"/><path d="M.6 16.200l7 7M7.600 16.200l-7 7M20.700 16.200l7 7M27.700 16.200l-7 7" stroke="#000" stroke-width=".9"/><path d="M13.5 9.7v6M13.5 9.7l-2.4 2.6M13.5 9.7l2.4 2.6" stroke="#000" stroke-width="1.2" fill="none"/></svg></div>
<div class="btn o" style="left:1279px;top:442px"><i></i><svg viewBox="0 0 28 28"><polygon points="0,0 8.5,7 5.5,7.8 9,15.5 7,16.5 3.5,8.8 0.8,11" fill="#000" transform="translate(10.1,5.1)"/></svg></div>
<div class="btn o" style="left:1319px;top:442px"><i></i><svg viewBox="0 0 28 28"><rect x="4.500" y="3.500" width="19.100" height="19.600" fill="none" stroke="#e01800" stroke-width="2"/><polygon points="0,0 8.5,7 5.5,7.8 9,15.5 7,16.5 3.5,8.8 0.8,11" fill="#000" transform="translate(10.2,5.1)"/></svg></div>
<div class="btn o" style="left:1359px;top:442px"><i></i><svg viewBox="0 0 28 28"><polygon points="9.800,3.500 23.600,3.500 23.600,23.100 9.800,23.100 4.400,18 4.400,8.600" fill="none" stroke="#e01800" stroke-width="2"/><polygon points="0,0 8.5,7 5.5,7.8 9,15.5 7,16.5 3.5,8.8 0.8,11" fill="#000" transform="translate(10.2,5.1)"/></svg></div>
<div class="btn o" style="left:1399px;top:442px"><i></i><svg viewBox="0 0 28 28"><path d="M5.400 0v15M4.500 23.600h6.700v-9.300h3.400V6.400h8" fill="none" stroke="#000" stroke-width="1"/><circle cx="5.400" cy="15.200" r="2.300" fill="#e81800" stroke="#601000" stroke-width=".5"/><circle cx="4.500" cy="23.600" r="2.300" fill="#20e820" stroke="#106010" stroke-width=".5"/><circle cx="22.700" cy="6.400" r="2.300" fill="#20e820" stroke="#106010" stroke-width=".5"/><polygon points="0,0 7.500,6.500 4.800,7.200 7.800,14 6,14.800 3,8 0.600,10" fill="#000" transform="translate(18,11.200)"/></svg></div>
<div class="a" style="left:1276px;top:483px;width:164px;height:254px;background:#000;border:solid;border-width:2px 1px 2px 2px;border-color:#3c6a60 #a8f0dc #c8fff0 #2e7a66"></div>
<svg class="a" style="left:1278px;top:486px" width="162" height="250" viewBox="1278 486 162 250"><rect x="1278.500" y="554.500" width="170" height="111" fill="none" stroke="#3c8c1c" stroke-width="1"/><rect x="1338" y="592" width="62" height="39" fill="#f00"/><rect x="1342.600" y="600" width="30.800" height="20.300" fill="#20f4f4"/><g fill="#f00"><rect x="1346.5" y="602" width="2.600" height="6.400" rx="1"/><rect x="1346.5" y="611" width="2.600" height="6.200" rx="1"/><rect x="1351.2" y="602" width="2.600" height="6.400" rx="1"/><rect x="1351.2" y="611" width="2.600" height="6.200" rx="1"/><rect x="1356.6" y="602" width="2.600" height="6.400" rx="1"/><rect x="1356.6" y="611" width="2.600" height="6.200" rx="1"/><rect x="1362.2" y="602" width="2.600" height="6.400" rx="1"/><rect x="1362.2" y="611" width="2.600" height="6.200" rx="1"/><rect x="1367.6" y="602" width="2.600" height="6.400" rx="1"/><rect x="1367.6" y="611" width="2.600" height="6.200" rx="1"/></g><path d="M1341 623l3-3M1347 598l2 2M1349 622l2-2M1353 598v2M1355 620v2M1358 598l1.500 2M1360 622l1.500-2M1364 598v2M1366 620v2M1369 598v2M1370.500 620l2 2.500M1372.500 600.500l3-3M1373.500 603.500l1.500 1.500M1342 617l-1.500 1.500" stroke="#e0ffff" stroke-width="1.100" fill="none"/></svg>
<div class="a" style="left:1276px;top:737px;width:164px;height:43px;background:#54ccb0;border:solid;border-width:2px 2px 0 2px;border-color:#1e6a58 #c8f0f0 #000 #3c7a6c"></div>
<div class="a" style="left:1276px;top:780px;width:164px;height:2px;background:#000"></div>
<div class="t" style="left:1281px;top:746px;font-size:13px;letter-spacing:1.4px">X = 9.206903<span style="letter-spacing:-1.200px">mm</span></div>
<div class="t" style="left:1281px;top:761px;font-size:13px;letter-spacing:1.4px">Y = 13.345905<span style="letter-spacing:-1.200px">mm</span></div>
<div class="a" style="left:0;top:781px;width:156px;height:1px;background:#000"></div>
<div class="a" style="left:0;top:782px;width:1440px;height:33px;background:#fffdd0"></div>
<div class="a" style="left:0;top:815px;width:1440px;height:1px;background:#000"></div>
<div class="a" style="left:348px;top:782px;width:1011px;height:1px;background:#000"></div>
<div class="a" style="left:95px;top:782px;width:1px;height:33px;background:#000"></div>
<div class="a" style="left:143px;top:782px;width:1px;height:33px;background:#000"></div>
<div class="a" style="left:316px;top:782px;width:1px;height:33px;background:#000"></div>
<div class="a" style="left:347px;top:782px;width:1px;height:33px;background:#000"></div>
<div class="a" style="left:0;top:782px;width:66px;height:32px;background:#000"></div>
<div class="a" style="left:2px;top:782px;width:30px;height:31px;background:#fffdd0;border:1px solid;border-color:#fffff0 #e8e6b8 #e8e6b8 #fffff0"><div class="a" style="left:2px;top:2px;width:24px;height:25px;border:1px solid #d6d4a6"></div><svg class="a" style="left:4px;top:5px" width="21" height="21" viewBox="0 0 21 21"><rect x=".75" y=".75" width="19.500" height="19.500" fill="none" stroke="#000" stroke-width="1.500"/><path d="M5 5L16 15M5 5h4M5 5v4M16 15h-4M16 15v-4M3.500 3.500v14h14" stroke="#000" fill="none" stroke-width="1.100"/></svg></div>
<div class="a" style="left:34px;top:782px;width:30px;height:31px;background:#fffdd0;border:1px solid;border-color:#fffff0 #e8e6b8 #e8e6b8 #fffff0"><div class="a" style="left:2px;top:2px;width:24px;height:25px;border:1px solid #d6d4a6"></div><svg class="a" style="left:4px;top:5px" width="21" height="21" viewBox="0 0 21 21"><rect x=".75" y=".75" width="19.500" height="19.500" fill="none" stroke="#000" stroke-width="1.500"/><path d="M3 17.500L16 4M3 17.500h15" stroke="#000" fill="none" stroke-width="1.400"/><path d="M7 6v3h2" stroke="#000" fill="none" stroke-width=".9"/><text x="11.500" y="15.500" font-size="6.500" font-weight="bold" font-family="Liberation Sans,sans-serif">α</text></svg></div>
<div class="a" style="left:66px;top:783px;width:29px;height:32px;background:#fffdd0;border:3px solid #54ccb0"><div class="a" style="left:0;top:0;width:23px;height:26px;border:2px solid;border-color:#fffff0 #a49c7c #a49c7c #fffff0"><svg class="a" style="left:1px;top:2px" width="17" height="17" viewBox="0 0 17 17"><rect x=".6" y=".6" width="15.800" height="15.800" fill="none" stroke="#000" stroke-width="1.200"/><path d="M8.500 2.500v14M2.500 9h14M2.500 16V8l5.500-5.500h8" stroke="#000" fill="none" stroke-width="1.100"/></svg></div></div>
<div class="t" style="left:98px;top:793px;font-size:12px;letter-spacing:0.3px">X Y :</div>
<div class="a" style="left:144px;top:783px;width:172px;height:32px;background:#fffdd0;border:2px solid;border-color:#fffde0 #fffde0 #fffde0 #fffde0"><div class="a" style="left:0;top:0;right:0;bottom:0;border:2px solid #b0ae84"></div><div class="a" style="left:6px;top:3px;width:1px;height:14px;border-left:1px dotted #000"></div></div>
<div class="a" style="left:317px;top:783px;width:30px;height:32px;background:#fffdd0;border:3px solid #54ccb0"><div class="a" style="left:0;top:0;width:24px;height:26px;border:2px solid;border-color:#fffff0 #a49c7c #a49c7c #fffff0"><div class="a" style="left:2px;top:2px;width:16px;height:18px;border:1px solid #000"></div><div class="t sans" style="left:8px;top:4px;font-size:15px;font-weight:bold">!</div></div></div>
<div class="t" style="left:352px;top:793px;font-size:12px;letter-spacing:-0.17px">&lt;M1&gt; - Select first area corner</div>
<div class="a" style="left:1359px;top:781px;width:81px;height:34px;background:#54ccb0;border:solid #000;border-width:1px 0 0 2px"></div>
<div class="a" style="left:1438px;top:782px;width:2px;height:33px;background:#c8f0f0"></div>
<div class="a" style="left:1367px;top:784px;width:70px;height:28px;background:#54ccb0;border:2px solid;border-color:#b4f4e4 #2c7464 #2c7464 #b4f4e4"></div>
<div class="t" style="left:1373px;top:793px;font-size:13px;letter-spacing:1.200px">MM</div>
<div class="a" style="left:1417px;top:795px;width:12px;height:7px;background:#54ccb0;border:2px solid;border-color:#c0f8e8 #2c6c5e #2c6c5e #c0f8e8"></div>
<div class="a" style="left:0;top:816px;width:1440px;height:29px;background:#6a9a98"></div>
<div class="a" style="left:2px;top:818px;width:1437px;height:27px;background:#b4ffff;border:1px solid #000"><div class="a" style="left:0;top:0;right:0;bottom:0;border:2px solid;border-color:#dcffff #b4ffff #b4ffff #dcffff"></div><div class="a" style="left:3px;right:2px;bottom:2px;height:2px;background:#5c9494"></div><div class="a" style="right:2px;top:3px;bottom:2px;width:2px;background:#5c9494"></div></div>
<div class="t" style="left:622px;top:825px;font-size:12px;letter-spacing:-0.17px">ts,#6,Pad,X=4,Y=13,r3000,POS</div>
<div class="a" style="left:0;top:845px;width:1440px;height:3px;background:#f4f4f0"></div>
<div class="a" style="left:0;top:848px;width:1440px;height:3px;background:#d4d0c8"></div>
</body></html>
